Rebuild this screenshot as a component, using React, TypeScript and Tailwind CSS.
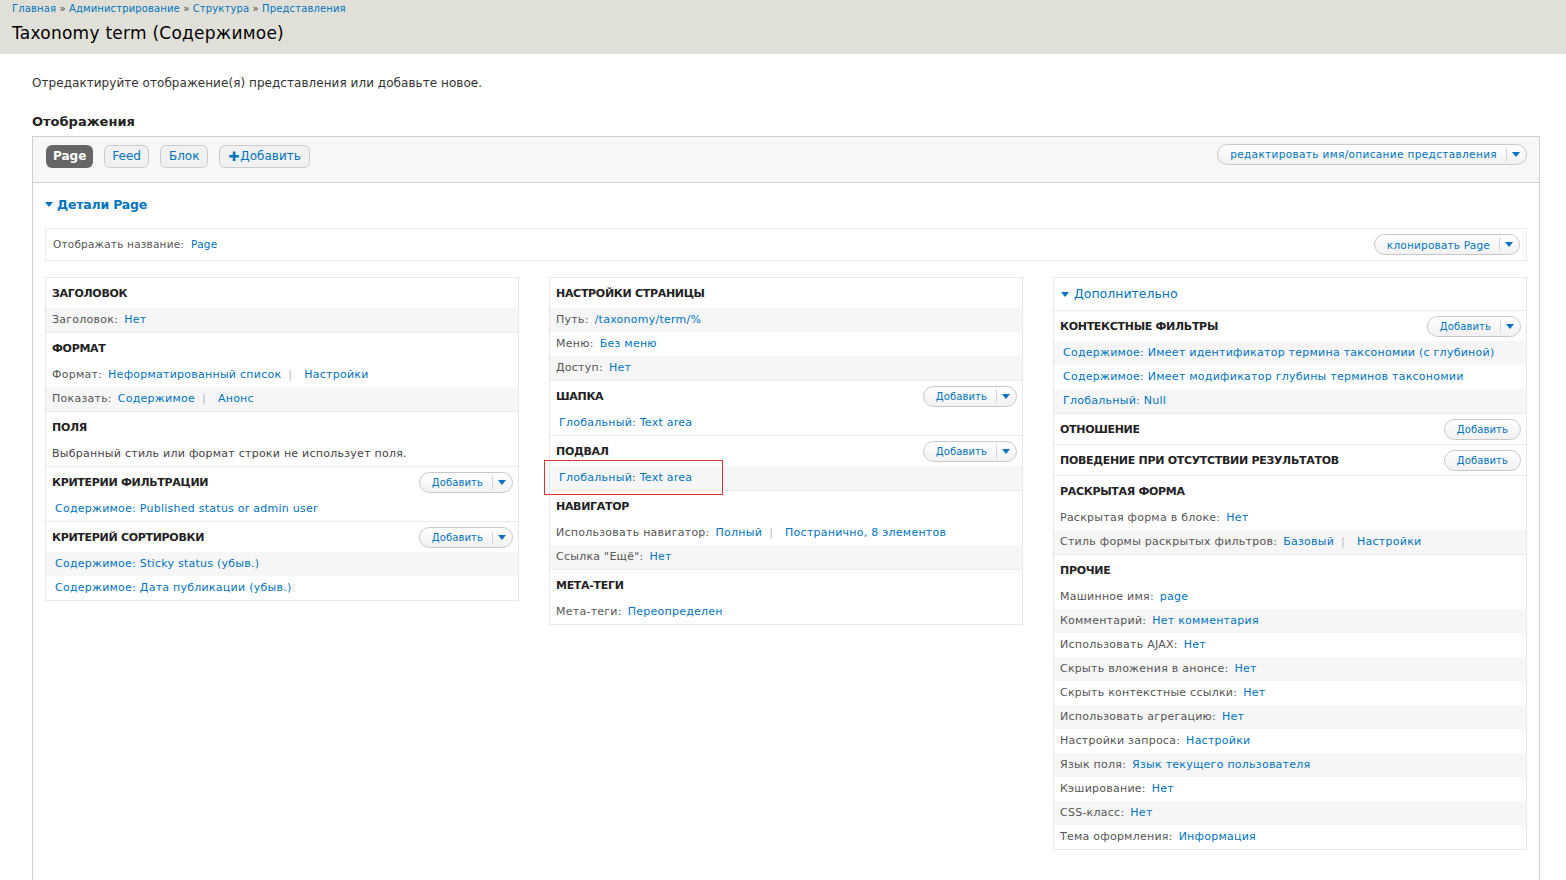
import React from 'react';

type Row = {
    label?: string;
    links?: string[];
    text?: string;
    gray?: boolean;
    linkOnly?: string;
    marked?: boolean;
};

type SectionData = {
    title: string;
    button?: 'add' | 'dropdown';
    rows: Row[];
};

const Caret: React.FC<{ className?: string }> = ({ className }) => (
    <svg width="8" height="5" viewBox="0 0 8 5" className={className}>
        <path d="M0 0h8L4 5z" fill="#0074bd" />
    </svg>
);

const AddButton: React.FC<{ dropdown?: boolean; label?: string; textClass?: string }> = ({ dropdown, label = 'Добавить', textClass = 'text-[10px] tracking-[0.1px]' }) => (
    <div className="flex items-center h-[21px] rounded-full border border-[#c8c8c8] bg-gradient-to-b from-white to-[#f1f1f1] text-[#0074bd]">
        <span className={`pl-[12px] leading-none ${dropdown ? 'pr-[9px]' : 'pr-[12px]'} ${textClass}`}>{label}</span>
        {dropdown && (
            <span className="flex items-center h-[13px] border-l border-[#d6d6d6] pl-[5px] pr-[6px]">
                <Caret />
            </span>
        )}
    </div>
);

const Links: React.FC<{ links: string[] }> = ({ links }) => (
    <>
        {links.map((l, i) => (
            <React.Fragment key={l}>
                {i > 0 && <span className="text-[#b8b8b8] ml-[7px] mr-[12px]">|</span>}
                <span className="text-[#0074bd]">{l}</span>
            </React.Fragment>
        ))}
    </>
);

const Section: React.FC<{ data: SectionData; first?: boolean }> = ({ data, first }) => (
    <div className={first ? '' : 'border-t border-[#ececec]'}>
        <div className="flex items-center justify-between h-[30px] pl-[6px] pr-[5px] pt-[1px]">
            <span className="font-bold text-[11px] text-[#222] tracking-[-0.3px]">{data.title}</span>
            {data.button && <AddButton dropdown={data.button === 'dropdown'} />}
        </div>
        {data.rows.map((r, i) => (
            <div key={i} className={`relative flex items-center h-6 px-[6px] text-[11px] tracking-[0.25px] ${r.gray ? 'bg-[#f6f6f6]' : 'bg-white'}`}>
                {r.label && <span className="text-[#555] mr-[6px]">{r.label}</span>}
                {r.links && <Links links={r.links} />}
                {r.text && <span className="text-[#444]">{r.text}</span>}
                {r.linkOnly && <span className="text-[#0074bd] pl-[3px]">{r.linkOnly}</span>}
                {r.marked && <span className="absolute left-[-6px] top-[-6px] w-[179px] h-[35px] border border-[#e0312f]"></span>}
            </div>
        ))}
    </div>
);

const col1: SectionData[] = [
    { title: 'ЗАГОЛОВОК', rows: [{ label: 'Заголовок:', links: ['Нет'], gray: true }] },
    {
        title: 'ФОРМАТ',
        rows: [
            { label: 'Формат:', links: ['Неформатированный список', 'Настройки'] },
            { label: 'Показать:', links: ['Содержимое', 'Анонс'], gray: true },
        ],
    },
    { title: 'ПОЛЯ', rows: [{ text: 'Выбранный стиль или формат строки не использует поля.' }] },
    { title: 'КРИТЕРИИ ФИЛЬТРАЦИИ', button: 'dropdown', rows: [{ linkOnly: 'Содержимое: Published status or admin user' }] },
    {
        title: 'КРИТЕРИЙ СОРТИРОВКИ',
        button: 'dropdown',
        rows: [
            { linkOnly: 'Содержимое: Sticky status (убыв.)', gray: true },
            { linkOnly: 'Содержимое: Дата публикации (убыв.)' },
        ],
    },
];

const col2: SectionData[] = [
    {
        title: 'НАСТРОЙКИ СТРАНИЦЫ',
        rows: [
            { label: 'Путь:', links: ['/taxonomy/term/%'], gray: true },
            { label: 'Меню:', links: ['Без меню'] },
            { label: 'Доступ:', links: ['Нет'], gray: true },
        ],
    },
    { title: 'ШАПКА', button: 'dropdown', rows: [{ linkOnly: 'Глобальный: Text area' }] },
    { title: 'ПОДВАЛ', button: 'dropdown', rows: [{ linkOnly: 'Глобальный: Text area', gray: true, marked: true }] },
    {
        title: 'НАВИГАТОР',
        rows: [
            { label: 'Использовать навигатор:', links: ['Полный', 'Постранично, 8 элементов'] },
            { label: 'Ссылка "Ещё":', links: ['Нет'], gray: true },
        ],
    },
    { title: 'МЕТА-ТЕГИ', rows: [{ label: 'Мета-теги:', links: ['Переопределен'] }] },
];

const col3: SectionData[] = [
    {
        title: 'КОНТЕКСТНЫЕ ФИЛЬТРЫ',
        button: 'dropdown',
        rows: [
            { linkOnly: 'Содержимое: Имеет идентификатор термина таксономии (с глубиной)', gray: true },
            { linkOnly: 'Содержимое: Имеет модификатор глубины терминов таксономии' },
            { linkOnly: 'Глобальный: Null', gray: true },
        ],
    },
    { title: 'ОТНОШЕНИЕ', button: 'add', rows: [] },
    { title: 'ПОВЕДЕНИЕ ПРИ ОТСУТСТВИИ РЕЗУЛЬТАТОВ', button: 'add', rows: [] },
    {
        title: 'РАСКРЫТАЯ ФОРМА',
        rows: [
            { label: 'Раскрытая форма в блоке:', links: ['Нет'] },
            { label: 'Стиль формы раскрытых фильтров:', links: ['Базовый', 'Настройки'], gray: true },
        ],
    },
    {
        title: 'ПРОЧИЕ',
        rows: [
            { label: 'Машинное имя:', links: ['page'] },
            { label: 'Комментарий:', links: ['Нет комментария'], gray: true },
            { label: 'Использовать AJAX:', links: ['Нет'] },
            { label: 'Скрыть вложения в анонсе:', links: ['Нет'], gray: true },
            { label: 'Скрыть контекстные ссылки:', links: ['Нет'] },
            { label: 'Использовать агрегацию:', links: ['Нет'], gray: true },
            { label: 'Настройки запроса:', links: ['Настройки'] },
            { label: 'Язык поля:', links: ['Язык текущего пользователя'], gray: true },
            { label: 'Кэширование:', links: ['Нет'] },
            { label: 'CSS-класс:', links: ['Нет'], gray: true },
            { label: 'Тема оформления:', links: ['Информация'] },
        ],
    },
];

const Column: React.FC<{ sections: SectionData[]; top?: React.ReactNode }> = ({ sections, top }) => (
    <div className="border border-[#e9e9e9] self-start">
        {top}
        {sections.map((s, i) => (
            <Section key={s.title} data={s} first={i === 0 && !top} />
        ))}
    </div>
);

const tabClass = 'h-[23px] flex items-center rounded-[6px] border border-[#ccc] bg-[#f1f1f1] text-[#0074bd]';

const App: React.FC = () => {
    return (
        <div className="min-h-[880px] bg-white text-[#333]" style={{ fontFamily: '"DejaVu Sans", Verdana, sans-serif' }}>
            <div className="bg-[#e0e0d8] h-[54px] px-3">
                <div className="text-[10px] text-[#0074bd] pt-[1px] tracking-[0.13px]">
                    Главная <span className="text-[#444]">»</span> Администрирование <span className="text-[#444]">»</span> Структура <span className="text-[#444]">»</span> Представления
                </div>
                <h1 className="text-[17px] text-black mt-[5px] tracking-[0.25px]">Taxonomy term (Содержимое)</h1>
            </div>

            <div className="px-8">
                <p className="text-[12px] text-[#333] mt-[20px] tracking-[0.05px]">Отредактируйте отображение(я) представления или добавьте новое.</p>
                <h2 className="text-[13px] font-bold text-[#222] mt-[20px] mb-[4px]">Отображения</h2>

                <div className="border border-[#cfcfcf] border-b-0 min-h-[745px] mr-[-6px]">
                    <div className="flex items-start justify-between h-[46px] bg-[#f7f7f7] border-b border-[#d0d0d0] pl-[13px] pr-[12px] pt-[7px]">
                        <div className="flex items-center gap-[11px] text-[12px] mt-[1px]">
                            <span className="h-[23px] px-[7px] flex items-center rounded-[6px] bg-[#666] text-white font-bold">Page</span>
                            <span className={`${tabClass} px-[7px]`}>Feed</span>
                            <span className={`${tabClass} px-[8px]`}>Блок</span>
                            <span className={`${tabClass} px-[8px]`}>
                                <span className="font-bold text-[13px] mr-[1px] leading-none">✚</span>Добавить
                            </span>
                        </div>
                        <AddButton dropdown label="редактировать имя/описание представления" textClass="text-[10.5px] tracking-[0.35px]" />
                    </div>

                    <div className="pl-[12px] pr-[12px]">
                        <div className="flex items-center gap-[4px] mt-[13px] text-[#0074bd] font-bold text-[12.5px] tracking-[-0.2px]">
                            <Caret />
                            <span>Детали Page</span>
                        </div>
                        <div className="flex items-center justify-between h-[33px] mt-[14px] border border-[#ececec] pl-[7px] pr-[6px]">
                            <div className="text-[10.5px] tracking-[0.2px]">
                                <span className="text-[#555] mr-[7px]">Отображать название:</span>
                                <span className="text-[#0074bd]">Page</span>
                            </div>
                            <AddButton dropdown label="клонировать Page" textClass="text-[10.5px] tracking-[0.2px]" />
                        </div>

                        <div className="grid grid-cols-3 gap-[30px] mt-[16px]">
                            <Column sections={col1} />
                            <Column sections={col2} />
                            <Column
                                sections={col3}
                                top={
                                    <div className="flex items-center gap-[5px] h-[32px] pl-[7px] text-[12.5px] text-[#0074bd]">
                                        <Caret />
                                        <span>Дополнительно</span>
                                    </div>
                                }
                            />
                        </div>
                    </div>
                </div>
            </div>
        </div>
    );
};

export default App;
